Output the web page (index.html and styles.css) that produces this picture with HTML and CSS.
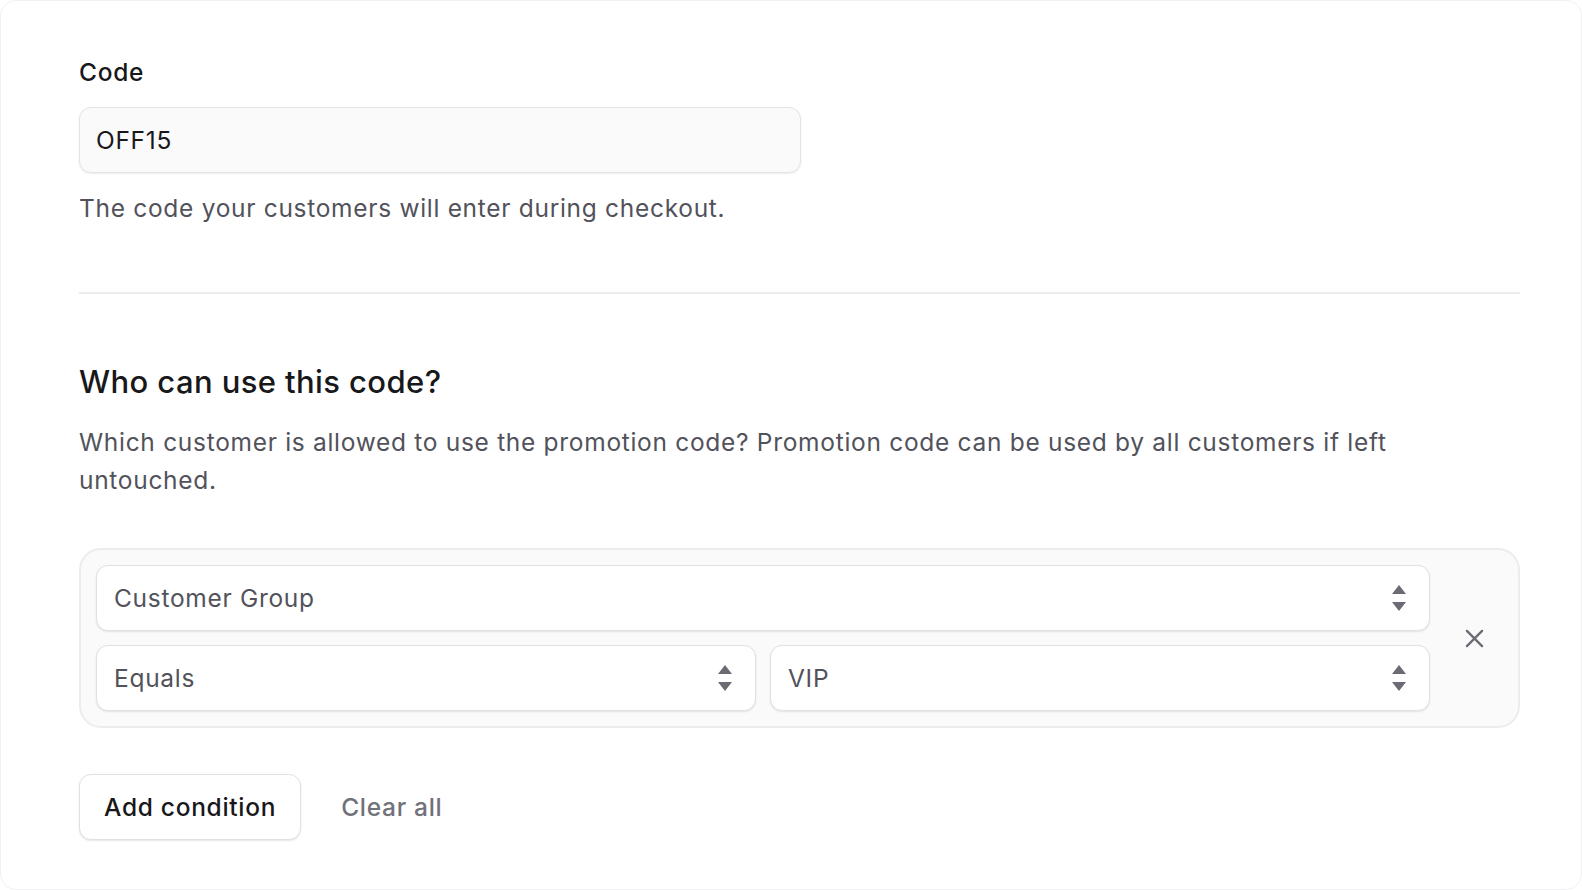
FILE: index.html
```html
<!DOCTYPE html>
<html lang="en">

<head>
    <meta charset="UTF-8">
    <meta name="viewport" content="width=device-width, initial-scale=1.0">
    <title>Promotion code</title>
    <link rel="stylesheet" href="styles.css">
</head>

<body>
    <main class="page">
        <section class="field">
            <label class="label" for="code">Code</label>
            <div class="input">OFF15</div>
            <p class="hint">The code your customers will enter during checkout.</p>
        </section>

        <hr class="divider">

        <section class="rules">
            <h2>Who can use this code?</h2>
            <p class="hint">Which customer is allowed to use the promotion code? Promotion code can be used by all customers if left untouched.</p>

            <div class="condition">
                <div class="selects">
                    <div class="select">
                        <span>Customer Group</span>
                        <svg class="arrows" viewBox="0 0 14 26"><path d="M7 0 L14 9 H0 Z M0 17 H14 L7 26 Z" /></svg>
                    </div>
                    <div class="pair">
                        <div class="select">
                            <span>Equals</span>
                            <svg class="arrows" viewBox="0 0 14 26"><path d="M7 0 L14 9 H0 Z M0 17 H14 L7 26 Z" /></svg>
                        </div>
                        <div class="select">
                            <span>VIP</span>
                            <svg class="arrows" viewBox="0 0 14 26"><path d="M7 0 L14 9 H0 Z M0 17 H14 L7 26 Z" /></svg>
                        </div>
                    </div>
                </div>
                <button type="button" class="remove">
                    <svg viewBox="0 0 20 20"><path d="M2 2 L18 18 M18 2 L2 18" /></svg>
                </button>
            </div>

            <div class="actions">
                <button type="button" class="btn">Add condition</button>
                <button type="button" class="link">Clear all</button>
            </div>
        </section>
    </main>
</body>

</html>
```

FILE: styles.css
```css
* {
    box-sizing: border-box;
}

html,
body {
    margin: 0;
    height: 100%;
    overflow: hidden;
    background: #ffffff;
}

body {
    font-family: Inter, "Liberation Sans", sans-serif;
    color: #18181b;
    letter-spacing: 0.7px;
}

.page {
    height: 100%;
    border: 1px solid #f1f1f3;
    border-radius: 16px;
    padding: 52px 61px 0 78px;
}

.field {
    width: 722px;
}

.label {
    display: block;
    font-size: 24.5px;
    font-weight: 500;
    line-height: 38px;
    margin-bottom: 16px;
}

.input {
    height: 66px;
    display: flex;
    align-items: center;
    padding: 0 16px;
    font-size: 24.5px;
    background: #fafafa;
    border: 1px solid #e4e4e7;
    border-radius: 12px;
    box-shadow: 0 1px 2px rgba(0, 0, 0, 0.08);
}

.hint {
    margin: 0;
    font-size: 24.5px;
    line-height: 38px;
    color: #52525b;
}

.field .hint {
    margin-top: 16px;
}

.divider {
    border: none;
    border-top: 2px solid #ececee;
    margin: 65px 0 0;
}

.rules h2 {
    margin: 68px 0 21px;
    font-size: 31px;
    font-weight: 500;
    line-height: 40px;
    letter-spacing: 0.4px;
}

.rules .hint {
    padding-right: 120px;
}

.condition {
    margin-top: 49px;
    display: flex;
    align-items: center;
    background: #fafafa;
    border: 2px solid #ececee;
    border-radius: 22px;
    padding: 15px 0 15px 15px;
}

.selects {
    flex: 1;
    display: flex;
    flex-direction: column;
    gap: 14px;
}

.pair {
    display: grid;
    grid-template-columns: 1fr 1fr;
    gap: 14px;
}

.select {
    height: 66px;
    display: flex;
    align-items: center;
    justify-content: space-between;
    padding: 0 23px 0 17px;
    font-size: 24.5px;
    color: #52525b;
    background: #ffffff;
    border: 1px solid #e1e1e4;
    border-radius: 12px;
    box-shadow: 0 1px 2px rgba(0, 0, 0, 0.1);
}

.arrows {
    width: 14px;
    height: 26px;
    fill: #6b6b73;
}

.remove {
    width: 88px;
    background: none;
    border: none;
    padding: 0;
    display: flex;
    justify-content: center;
}

.remove svg {
    width: 19px;
    height: 19px;
    stroke: #6b6b73;
    stroke-width: 2.4;
    stroke-linecap: round;
}

.actions {
    margin-top: 46px;
    display: flex;
    align-items: center;
    gap: 16px;
}

.btn {
    height: 66px;
    padding: 0 24px;
    font-family: inherit;
    font-size: 24.5px;
    font-weight: 500;
    letter-spacing: inherit;
    color: #18181b;
    background: #ffffff;
    border: 1px solid #e1e1e4;
    border-radius: 12px;
    box-shadow: 0 1px 2px rgba(0, 0, 0, 0.1);
}

.link {
    font-family: inherit;
    font-size: 24.5px;
    font-weight: 500;
    letter-spacing: inherit;
    color: #71717a;
    background: none;
    border: none;
    padding: 0 24px;
}
```
